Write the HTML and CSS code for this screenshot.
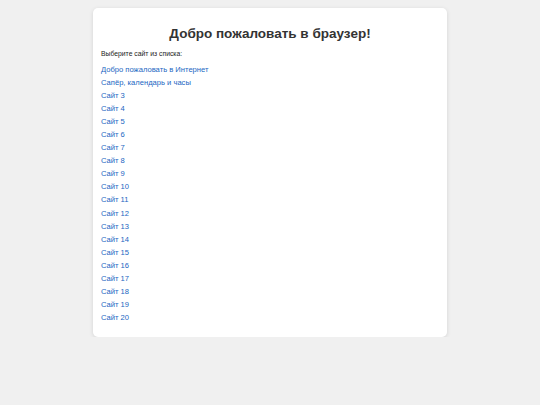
FILE: index.html
```html
<!DOCTYPE html>
<html lang="ru">
<head>
<meta charset="utf-8">
<title>Браузер</title>
<link rel="stylesheet" href="styles.css">
</head>
<body>
<div class="card">
  <h1 class="title">Добро пожаловать в браузер!</h1>
  <p class="hint">Выберите сайт из списка:</p>
  <ul class="sites">
    <li><a href="#">Добро пожаловать в Интернет</a></li>
    <li><a href="#">Сапёр, календарь и часы</a></li>
    <li><a href="#">Сайт 3</a></li>
    <li><a href="#">Сайт 4</a></li>
    <li><a href="#">Сайт 5</a></li>
    <li><a href="#">Сайт 6</a></li>
    <li><a href="#">Сайт 7</a></li>
    <li><a href="#">Сайт 8</a></li>
    <li><a href="#">Сайт 9</a></li>
    <li><a href="#">Сайт 10</a></li>
    <li><a href="#">Сайт 11</a></li>
    <li><a href="#">Сайт 12</a></li>
    <li><a href="#">Сайт 13</a></li>
    <li><a href="#">Сайт 14</a></li>
    <li><a href="#">Сайт 15</a></li>
    <li><a href="#">Сайт 16</a></li>
    <li><a href="#">Сайт 17</a></li>
    <li><a href="#">Сайт 18</a></li>
    <li><a href="#">Сайт 19</a></li>
    <li><a href="#">Сайт 20</a></li>
  </ul>
</div>
</body>
</html>
```
FILE: styles.css
```css
html, body {
  margin: 0;
  padding: 0;
  background: #f0f0f0;
  font-family: "Liberation Sans", Arial, sans-serif;
}
body {
  padding-top: 8px;
}
.card {
  width: 338px;
  margin: 0 auto;
  background: #fff;
  border-radius: 5px;
  box-shadow: 0 1px 4px rgba(0,0,0,0.12);
  padding: 16px 8px 12.5px 8px;
}
.title {
  margin: 0;
  text-align: center;
  font-size: 13.5px;
  line-height: 20px;
  font-weight: bold;
  color: #333;
}
.hint {
  margin: 5px 0 3.5px 0;
  font-size: 6.8px;
  line-height: 10px;
  color: #222;
}
.sites {
  list-style: none;
  margin: 0;
  padding: 0;
}
.sites li {
  font-size: 7.6px;
  line-height: 13.1px;
}
.sites a {
  color: #1a66c2;
  text-decoration: none;
}
```
